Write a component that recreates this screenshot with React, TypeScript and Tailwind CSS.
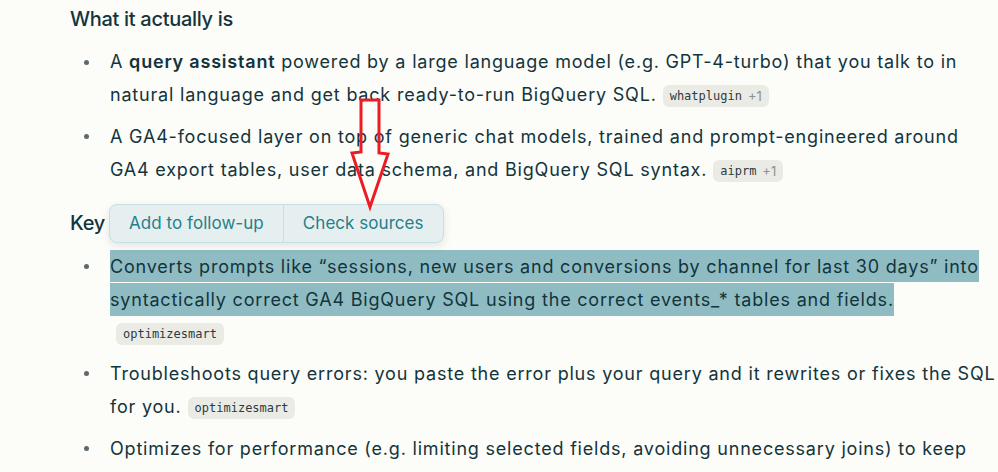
import React from "react";

function Chip({ name, extra }: { name: string; extra?: string }) {
  return (
    <span className="ml-[6px] inline-flex h-[22px] items-center gap-[6px] rounded-md bg-[#ebebe6] px-[7px] align-[1px] text-[12px] leading-none tracking-normal">
      <span className="font-['DejaVu_Sans_Mono',monospace] text-[#2b3a3e]">{name}</span>
      {extra && <span className="font-['Inter',sans-serif] text-[13px] text-[#8c9191]">{extra}</span>}
    </span>
  );
}

function Bullet({ children, className = "" }: { children: React.ReactNode; className?: string }) {
  return (
    <li className={"flex " + className}>
      <div className="w-[40px] shrink-0 pl-[14px] pt-[14.5px]">
        <div className="h-[5px] w-[5px] rounded-full bg-[#5d6a6d]" />
      </div>
      <div className="flex-1">{children}</div>
    </li>
  );
}

export default function App() {
  return (
    <div className="relative h-[472px] w-full overflow-hidden bg-[#fcfcf9] font-['Inter',sans-serif] text-[#13343b]">
      <div className="pl-[70px] pt-[4px]">
        <h2 className="text-[20px] font-medium leading-[30px] tracking-[-0.3px]">What it actually is</h2>
        <ul className="mt-[11px] text-[18px] leading-[33.4px] tracking-[0.8px]">
          <Bullet className="mb-[8px]">
            A <strong className="font-semibold">query assistant</strong> powered by a large language model (e.g.
            GPT-4-turbo) that you talk to in
            <br />
            natural language and get back ready-to-run BigQuery SQL.
            <Chip name="whatplugin" extra="+1" />
          </Bullet>
          <Bullet>
            A GA4-focused layer on top of generic chat models, trained and prompt-engineered around
            <br />
            GA4 export tables, user data schema, and BigQuery SQL syntax.
            <Chip name="aiprm" extra="+1" />
          </Bullet>
        </ul>
        <h2 className="mt-[21px] text-[20px] font-medium leading-[30px] tracking-[-0.3px]">Key capabilities</h2>
        <ul className="mt-[12px] text-[18px] leading-[33.4px] tracking-[0.8px]">
          <Bullet className="mb-[7px]">
            <span className="bg-[#8fbcc3] py-[5.8px]">
              Converts prompts like “sessions, new users and conversions by channel for last 30 days” into{" "}
              <br />
              syntactically correct GA4 BigQuery SQL using the correct events_* tables and fields.
            </span>
            <br />
            <Chip name="optimizesmart" />
          </Bullet>
          <Bullet className="mb-[8px]">
            Troubleshoots query errors: you paste the error plus your query and it rewrites or fixes the SQL
            <br />
            for you.
            <Chip name="optimizesmart" />
          </Bullet>
          <Bullet>
            Optimizes for performance (e.g. limiting selected fields, avoiding unnecessary joins) to keep
            <br />
            query costs and runtime low.
            <Chip name="optimizesmart" />
          </Bullet>
        </ul>
      </div>

      {/* selection popup */}
      <div className="absolute left-[109px] top-[204px] flex h-[39px] items-stretch rounded-lg border border-[#c6dfe0] bg-[#e6efef] text-[17px] tracking-[0.05px] text-[#23808c] shadow-[0_3px_10px_rgba(0,0,0,0.1)]">
        <div className="flex items-center px-[19px]">Add to follow-up</div>
        <div className="w-px bg-[#c6dfe0]" />
        <div className="flex items-center px-[19px]">Check sources</div>
      </div>

      {/* annotation arrow */}
      <svg className="absolute left-0 top-0" width="998" height="472" fill="none">
        <path
          d="M361 100 L379 100 L379 153 L388 154 L370 207 L352 153 L361 152 Z"
          stroke="#ec1c24"
          strokeWidth="3"
          strokeLinejoin="miter"
        />
      </svg>
    </div>
  );
}
